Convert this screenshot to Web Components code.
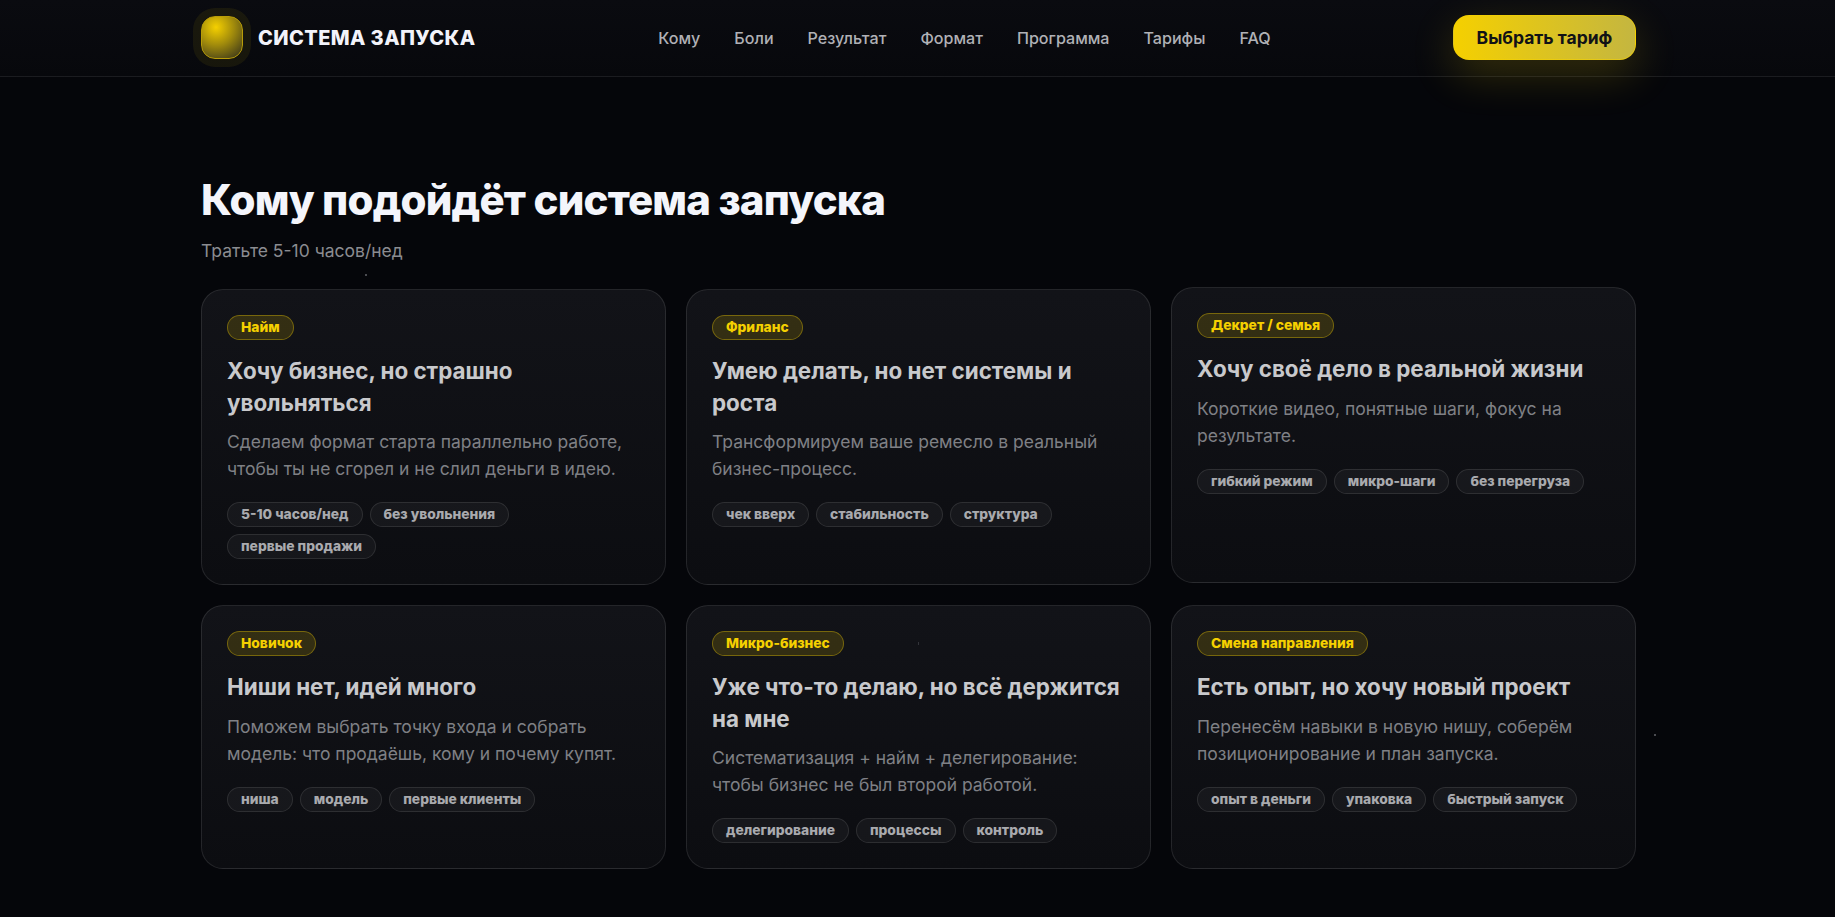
<!DOCTYPE html>
<html lang="ru"><head><meta charset="utf-8"><title>Система запуска</title>
<style>
html,body{margin:0;height:100%;background:#05060a;overflow:hidden}
body{font-family:Inter,"Noto Sans",sans-serif;color:#f2f3fa;-webkit-font-smoothing:antialiased}
</style></head><body>
<site-header></site-header>
<audience-section></audience-section>
<speck-layer></speck-layer>
<script>
class SiteHeader extends HTMLElement{constructor(){super();this.attachShadow({mode:'open'}).innerHTML=`<style>
:host{display:block;height:76px;border-bottom:1px solid rgba(255,255,255,.07);background:linear-gradient(180deg,#0a0b10,#07080c);position:relative}
.in{width:1435px;height:75px;margin-left:201px;display:flex;align-items:center;justify-content:space-between}
.brand{display:flex;align-items:center;gap:15px;font-weight:800;font-size:20px;letter-spacing:.4px;color:#f2f3fa;width:275px}
.logo{width:42px;height:43px;border-radius:14px;box-sizing:border-box;border:1px solid #b89c08;background:radial-gradient(circle at 35% 25%,#f5d000 0,#a08a0c 45%,#2e2c1c 100%);box-shadow:0 0 0 8px rgba(245,208,0,.07);flex:none}
nav{display:flex;gap:34px;font-size:16.1px;font-weight:500;color:#b0b1b6}
.cta{box-sizing:border-box;width:183px;height:45px;border-radius:16px;display:flex;align-items:center;justify-content:center;font-weight:700;font-size:17.5px;color:#111216;background:linear-gradient(90deg,#f5d000,#c4b640);border:1px solid rgba(245,208,0,.6);box-shadow:0 14px 44px rgba(245,208,0,.2)}
</style><div class="in"><div class="brand"><span class="logo"></span><span>СИСТЕМА ЗАПУСКА</span></div>
<nav><span>Кому</span><span>Боли</span><span>Результат</span><span>Формат</span><span>Программа</span><span>Тарифы</span><span>FAQ</span></nav>
<div class="cta">Выбрать тариф</div></div>`}}
customElements.define('site-header',SiteHeader);
class AudienceSection extends HTMLElement{constructor(){super();this.attachShadow({mode:'open'}).innerHTML=`<style>
:host{display:block;width:1435px;margin-left:201px;padding-top:99px}
h2{margin:0;font-size:42px;line-height:48px;font-weight:800;letter-spacing:-.02em;color:#f4f5fb}
p{margin:14px 0 0;font-size:17.5px;line-height:26px;color:#8b8c91}
.grid{display:grid;grid-template-columns:repeat(3,1fr);gap:20px;margin-top:25px}
</style><h2>Кому подойдёт система запуска</h2><p>Тратьте 5-10 часов/нед</p><div class="grid"><slot></slot></div>`;
const d=[['Найм','Хочу бизнес, но страшно увольняться','Сделаем формат старта параллельно работе, чтобы ты не сгорел и не слил деньги в идею.',['5-10 часов/нед','без увольнения','первые продажи']],
['Фриланс','Умею делать, но нет системы и роста','Трансформируем ваше ремесло в реальный бизнес-процесс.',['чек вверх','стабильность','структура']],
['Декрет / семья','Хочу своё дело в реальной жизни','Короткие видео, понятные шаги, фокус на результате.',['гибкий режим','микро-шаги','без перегруза']],
['Новичок','Ниши нет, идей много','Поможем выбрать точку входа и собрать модель: что продаёшь, кому и почему купят.',['ниша','модель','первые клиенты']],
['Микро-бизнес','Уже что-то делаю, но всё держится на мне','Систематизация + найм + делегирование: чтобы бизнес не был второй работой.',['делегирование','процессы','контроль']],
['Смена направления','Есть опыт, но хочу новый проект','Перенесём навыки в новую нишу, соберём позиционирование и план запуска.',['опыт в деньги','упаковка','быстрый запуск']]];
d.forEach((c,i)=>{const e=document.createElement('audience-card');if(i==2)e.setAttribute('lift','');e.innerHTML='<span slot="badge">'+c[0]+'</span><span slot="title">'+c[1]+'</span><span slot="desc">'+c[2]+'</span>'+c[3].map(t=>'<audience-tag>'+t+'</audience-tag>').join('');this.appendChild(e)})}}
class AudienceCard extends HTMLElement{constructor(){super();this.attachShadow({mode:'open'}).innerHTML=`<style>
:host{display:block;box-sizing:border-box;padding:25px;border-radius:22px;border:1px solid rgba(255,255,255,.1);background:linear-gradient(180deg,#121318,#0c0d11)}
:host([lift]){transform:translateY(-2px)}
.badge{display:inline-block;box-sizing:border-box;height:25px;line-height:23px;padding:0 13px;border-radius:999px;border:1px solid rgba(245,208,0,.35);background:rgba(245,208,0,.15);color:#f5d000;font-size:13.8px;font-weight:800;vertical-align:top}
h3{margin:15px 0 0;font-size:22.4px;line-height:31.5px;font-weight:700;color:#c8c9cc}
.d{margin:10px 0 0;font-size:17.5px;line-height:27px;color:#7f8085}
.tags{display:flex;flex-wrap:wrap;gap:7px;margin-top:20px}
</style><span class="badge"><slot name="badge"></slot></span><h3><slot name="title"></slot></h3><div class="d"><slot name="desc"></slot></div><div class="tags"><slot></slot></div>`}}
class AudienceTag extends HTMLElement{constructor(){super();this.attachShadow({mode:'open'}).innerHTML=`<style>
:host{display:block;box-sizing:border-box;height:25px;line-height:23px;padding:0 13px;border-radius:999px;border:1px solid rgba(255,255,255,.1);background:rgba(255,255,255,.04);color:#a9aaae;font-size:13.8px;font-weight:800}
</style><slot></slot>`}}
class SpeckLayer extends HTMLElement{constructor(){super();this.attachShadow({mode:'open'}).innerHTML=`<style>
:host{display:block;position:absolute;inset:0;pointer-events:none}
i{position:absolute;width:2px;height:2px;background:#4a4b50}
</style><i style="left:365px;top:274px"></i><i style="left:1654px;top:734px"></i><i style="left:918px;top:642px;height:3px;width:1px;background:#33343a"></i>`}}
customElements.define('audience-tag',AudienceTag);customElements.define('audience-card',AudienceCard);customElements.define('audience-section',AudienceSection);customElements.define('speck-layer',SpeckLayer);
</script></body></html>
